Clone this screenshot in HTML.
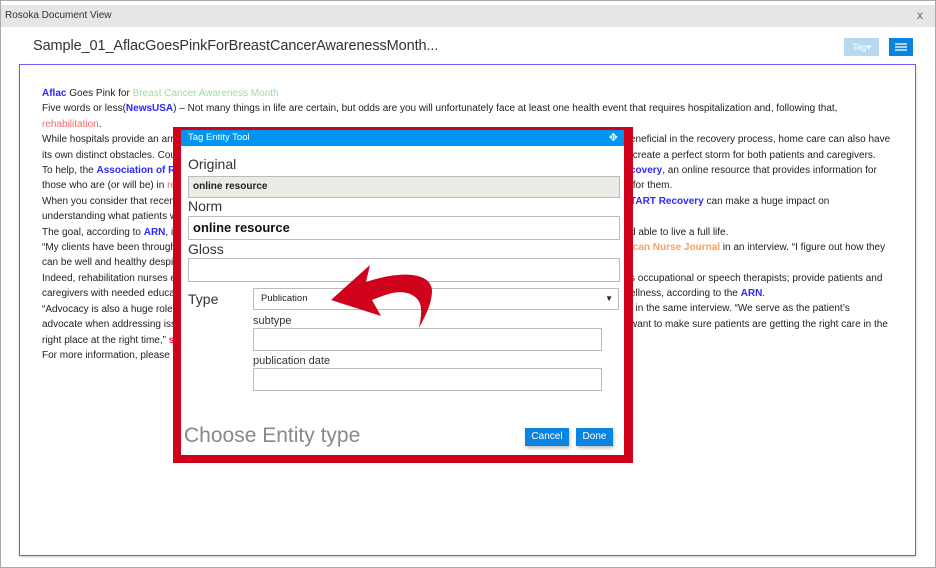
<!DOCTYPE html>
<html><head><style>
*{margin:0;padding:0;box-sizing:border-box}
body{width:936px;height:568px;background:#fff;font-family:"Liberation Sans",Arial,sans-serif;position:relative;overflow:hidden}
.abs{position:absolute}
.doc p{font-size:10px;line-height:15.4px;color:#222;white-space:nowrap}
.rt p{font-size:10px;line-height:15.4px;color:#222;white-space:nowrap;height:15.4px}
.b{color:#2a2aff;font-weight:bold}.g{color:#9fdc9f}.r{color:#f06a6a}.o{color:#f7a060;font-weight:bold}.rb{color:#e8203a;font-weight:bold}
.lbl{font-size:14px;color:#333;position:absolute}
.inp{position:absolute;border:1px solid #bbb;background:#fff}
.btn{position:absolute;background:#0a84e0;color:#fff;font-size:10px;text-align:center;line-height:18px;height:18px;box-shadow:1px 2px 3px rgba(0,0,0,.25)}
</style></head><body>
<div class="abs" style="left:0;top:0;width:936px;height:568px;border:1px solid #aaa;background:#fff"></div>
<div class="abs" style="left:1px;top:5px;width:934px;height:22px;background:#e6e6e6"></div>
<div class="abs" style="left:5px;top:10px;font-size:10px;color:#333">Rosoka Document View</div>
<div class="abs" style="left:917px;top:8px;font-size:12px;color:#666">x</div>
<div class="abs" style="left:33px;top:38px;font-size:14.5px;color:#333;letter-spacing:-0.1px">Sample_01_AflacGoesPinkForBreastCancerAwarenessMonth...</div>
<div class="abs" style="left:844px;top:38px;width:35px;height:18px;background:#b8d8f0;color:#fff;font-size:9px;line-height:18px;text-align:center">Tag▾</div>
<div class="abs" style="left:889px;top:38px;width:24px;height:18px;background:#0a84e0"><svg width="24" height="18"><g stroke="#fff" stroke-width="1.3"><line x1="6" y1="6" x2="18" y2="6"/><line x1="6" y1="9" x2="18" y2="9"/><line x1="6" y1="12" x2="18" y2="12"/></g></svg></div>
<div class="abs" style="left:19px;top:64px;width:897px;height:492px;border:1px solid #6a5cff;box-shadow:0 1px 2px rgba(0,0,0,.2)"></div>
<div class="abs doc" style="left:42px;top:86px">
<p><span class="b">Aflac</span> Goes Pink for <span class="g">Breast Cancer Awareness Month</span></p>
<p>Five words or less(<span class="b">NewsUSA</span>) – Not many things in life are certain, but odds are you will unfortunately face at least one health event that requires hospitalization and, following that,</p>
<p><span class="r">rehabilitation</span>.</p>
<p>While hospitals provide an arr</p>
<p>its own distinct obstacles. Cou</p>
<p>To help, the <span class="b">Association of R</span></p>
<p>those who are (or will be) in <span class="r">re</span></p>
<p>When you consider that recen</p>
<p>understanding what patients w</p>
<p>The goal, according to <span class="b">ARN</span>, i</p>
<p>“My clients have been through</p>
<p>can be well and healthy despi</p>
<p>Indeed, rehabilitation nurses e</p>
<p>caregivers with needed educa</p>
<p>“Advocacy is also a huge role</p>
<p>advocate when addressing iss</p>
<p>right place at the right time,” <span class="rb">s</span></p>
<p>For more information, please </p>
</div>
<div class="abs rt" style="left:630px;top:132.2px">
<p>eneficial in the recovery process, home care can also have</p>
<p>&nbsp;create a perfect storm for both patients and caregivers.</p>
<p><span class="b">covery</span>, an online resource that provides information for</p>
<p>&nbsp;for them.</p>
<p><span class="b">TART Recovery</span> can make a huge impact on</p>
<p></p>
<p>d able to live a full life.</p>
<p><span class="o">ican Nurse Journal</span> in an interview. “I figure out how they</p>
<p></p>
<p>s occupational or speech therapists; provide patients and</p>
<p>ellness, according to the <span class="b">ARN</span>.</p>
<p><span class="o">l</span> in the same interview. “We serve as the patient’s</p>
<p>want to make sure patients are getting the right care in the</p>
</div>
<div class="abs" style="left:173px;top:127px;width:460px;height:336px;background:#d0021b"></div>
<div class="abs" style="left:181px;top:130px;width:443px;height:325px;background:#fff"></div>
<div class="abs" style="left:181px;top:130px;width:443px;height:16px;background:#0096f0;color:#fff;font-size:9.5px;line-height:16px;padding-left:7px">Tag Entity Tool<span style="position:absolute;right:6px;top:0;font-size:11px">✥</span></div>
<div class="lbl" style="left:188px;top:156px">Original</div>
<div class="inp" style="left:188px;top:176px;width:432px;height:22px;background:#ebeae4;font-size:10px;font-weight:bold;line-height:20px;padding-left:4px;color:#222">online resource</div>
<div class="lbl" style="left:188px;top:198px">Norm</div>
<div class="inp" style="left:188px;top:216px;width:432px;height:24px;font-size:13px;font-weight:bold;line-height:22px;padding-left:4px;color:#111">online resource</div>
<div class="lbl" style="left:188px;top:241px">Gloss</div>
<div class="inp" style="left:188px;top:258px;width:432px;height:24px"></div>
<div class="lbl" style="left:188px;top:291px">Type</div>
<div class="inp" style="left:253px;top:288px;width:366px;height:22px;font-size:9.5px;line-height:20px;padding-left:7px;color:#222">Publication<span style="position:absolute;right:5px;font-size:8px">▼</span></div>
<div class="lbl" style="left:253px;top:315px;font-size:11px">subtype</div>
<div class="inp" style="left:253px;top:328px;width:349px;height:23px"></div>
<div class="lbl" style="left:253px;top:355px;font-size:11px">publication date</div>
<div class="inp" style="left:253px;top:368px;width:349px;height:23px"></div>
<div class="abs" style="left:184px;top:424px;font-size:21px;color:#888;font-weight:300">Choose Entity type</div>
<div class="btn" style="left:525px;top:428px;width:44px">Cancel</div>
<div class="btn" style="left:576px;top:428px;width:37px">Done</div>
<svg class="abs" style="left:0;top:0" width="936" height="568"><path d="M331,300 L370,265 L366,282 C395,272 430,270 432,290 C432,305 424,318 419,328 C422,312 424,300 410,294 C398,289 385,295 372,300 L381,316 Z" fill="#d0021b"/></svg>
</body></html>
